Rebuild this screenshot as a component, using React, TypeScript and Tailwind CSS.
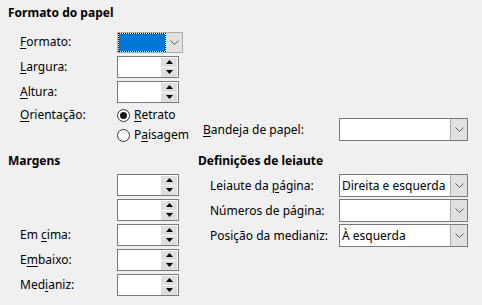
import type { ReactNode } from 'react'

// Page setup dialog tab: paper format + margins + layout settings

function Mn({ children }: { children: ReactNode }) {
  return <span className="underline underline-offset-2">{children}</span>
}

function Chevron() {
  return (
    <svg width="9" height="5" viewBox="0 0 9 5" className="text-[#606060]">
      <path d="M0.5 0.5 L4.5 4.5 L8.5 0.5" fill="none" stroke="currentColor" strokeWidth="1" />
    </svg>
  )
}

function Spin() {
  return (
    <div className="flex h-[22px] w-[62px] border border-[#7a7a7a] bg-white">
      <div className="flex-1" />
      <div className="flex flex-col justify-center gap-[1px] pr-[1px]">
        <div className="flex h-[9px] w-[16px] items-center justify-center bg-[#dedede]">
          <svg width="7" height="4" viewBox="0 0 7 4">
            <path d="M0 4 L3.5 0 L7 4 Z" fill="#000" />
          </svg>
        </div>
        <div className="flex h-[9px] w-[16px] items-center justify-center bg-[#dedede]">
          <svg width="7" height="4" viewBox="0 0 7 4">
            <path d="M0 0 L7 0 L3.5 4 Z" fill="#000" />
          </svg>
        </div>
      </div>
    </div>
  )
}

function Combo({ value, w = 'w-[129px]' }: { value?: string; w?: string }) {
  return (
    <div className={`flex h-[23px] ${w} border border-[#7a7a7a] bg-white`}>
      <div className="flex flex-1 items-center pl-[2px] leading-none">{value}</div>
      <div className="flex w-[17px] items-center justify-center border-l border-[#adadad] bg-[#e1e1e1]">
        <Chevron />
      </div>
    </div>
  )
}

function Radio({ checked, children }: { checked?: boolean; children: ReactNode }) {
  return (
    <div className="flex h-[18px] items-center gap-[4px]">
      <div className="flex h-[13px] w-[13px] items-center justify-center rounded-full border border-[#333] bg-white">
        {checked && <div className="h-[7px] w-[7px] rounded-full bg-[#1a1a1a]" />}
      </div>
      <span>{children}</span>
    </div>
  )
}

export default function App() {
  return (
    <div className="h-[305px] w-[482px] overflow-hidden bg-[#f0f0f0] pl-2 pt-[5px] font-['Noto_Sans',sans-serif] text-[12px] leading-4 text-black">
      <div className="font-bold">Formato do papel</div>

      <div className="mt-[10px] flex flex-col gap-[3px]">
        <div className="flex h-[22px] items-center">
          <div className="w-[109px] pl-3">
            <Mn>F</Mn>ormato:
          </div>
          <div className="flex h-[21px] w-[66px] border border-[#adadad] bg-white">
            <div className="flex-1 border border-dotted border-black bg-[#0078d7] bg-clip-padding" />
            <div className="flex w-[16px] items-center justify-center bg-[#e1e1e1]">
              <Chevron />
            </div>
          </div>
        </div>
        <div className="flex h-[22px] items-center">
          <div className="w-[109px] pl-3">
            <Mn>L</Mn>argura:
          </div>
          <Spin />
        </div>
        <div className="flex h-[22px] items-center">
          <div className="w-[109px] pl-3">
            <Mn>A</Mn>ltura:
          </div>
          <Spin />
        </div>
        <div className="flex items-start">
          <div className="flex h-[18px] w-[109px] items-center pl-3">
            <Mn>O</Mn>rientação:
          </div>
          <div className="flex w-[86px] flex-col gap-[2px]">
            <Radio checked>
              <Mn>R</Mn>etrato
            </Radio>
            <Radio>
              P<Mn>a</Mn>isagem
            </Radio>
          </div>
          <div className="mt-[12px] flex items-center">
            <div className="w-[136px]">
              <Mn>B</Mn>andeja de papel:
            </div>
            <Combo />
          </div>
        </div>
      </div>

      <div className="mt-[9px] flex">
        <div className="w-[190px]">
          <div className="font-bold">Margens</div>
          <div className="mt-[5px] flex flex-col gap-[3px]">
            {[
              null,
              null,
              <>
                Em <Mn>c</Mn>ima:
              </>,
              <>
                E<Mn>m</Mn>baixo:
              </>,
              <>
                Med<Mn>i</Mn>aniz:
              </>,
            ].map((label, i) => (
              <div key={i} className="flex h-[22px] items-center">
                <div className="w-[109px] pl-3">{label}</div>
                <Spin />
              </div>
            ))}
          </div>
        </div>
        <div>
          <div className="font-bold">Definições de leiaute</div>
          <div className="mt-[5px] flex flex-col gap-[2px]">
            <div className="flex items-center">
              <div className="w-[141px] pl-3">
                Leiaute da <Mn>p</Mn>ágina:
              </div>
              <Combo value="Direita e esquerda" />
            </div>
            <div className="flex items-center">
              <div className="w-[141px] pl-3">Números de página:</div>
              <Combo />
            </div>
            <div className="flex items-center">
              <div className="w-[141px] pl-3">Posição da medianiz:</div>
              <Combo value="À esquerda" />
            </div>
          </div>
        </div>
      </div>
    </div>
  )
}
